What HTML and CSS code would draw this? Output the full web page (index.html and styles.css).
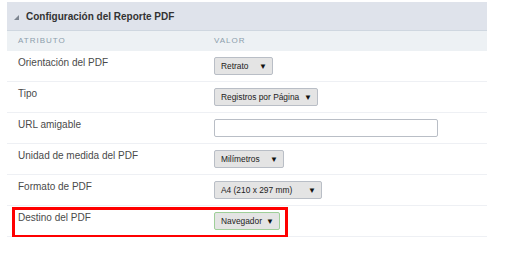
FILE: index.html
```html
<!DOCTYPE html>
<html lang="es">
<head>
  <meta charset="UTF-8" />
  <title>Configuración del Reporte PDF</title>
  <link rel="stylesheet" href="styles.css">
</head>
<body>
  <div class="panel">
    <div class="panel-title"><span class="caret"></span>Configuración del Reporte PDF</div>
    <div class="row head">
      <div>ATRIBUTO</div>
      <div>VALOR</div>
    </div>

    <div class="row">
      <div class="label">Orientación del PDF</div>
      <div><div class="select w-retrato"><span>Retrato</span><span class="arrow">▼</span></div></div>
    </div>
    <div class="row">
      <div class="label">Tipo</div>
      <div><div class="select w-tipo"><span>Registros por Página</span><span class="arrow">▼</span></div></div>
    </div>
    <div class="row">
      <div class="label">URL amigable</div>
      <div><div class="text-input"></div></div>
    </div>
    <div class="row">
      <div class="label">Unidad de medida del PDF</div>
      <div><div class="select w-unidad"><span>Milímetros</span><span class="arrow">▼</span></div></div>
    </div>
    <div class="row">
      <div class="label">Formato de PDF</div>
      <div><div class="select w-formato"><span>A4 (210 x 297 mm)</span><span class="arrow">▼</span></div></div>
    </div>
    <div class="row">
      <div class="label">Destino del PDF</div>
      <div><div class="select w-destino active"><span>Navegador</span><span class="arrow">▼</span></div></div>
    </div>

    <!-- highlight box -->
    <div class="highlight"></div>
  </div>
</body>
</html>
```

FILE: styles.css
```css
* {
  margin: 0;
  padding: 0;
  box-sizing: border-box;
}

body {
  background: #ffffff;
  font-family: 'Liberation Sans', Arial, sans-serif;
  color: #444;
  padding: 2px 0 0 7px;
}

.panel {
  width: 480px;
  position: relative;
}

.panel-title {
  height: 29px;
  background: #dfe3eb;
  border-bottom: 1px solid #cfd7e0;
  font-size: 10px;
  font-weight: bold;
  color: #333;
  display: flex;
  align-items: center;
  padding-left: 7px;
}

.caret {
  width: 0;
  height: 0;
  border-left: 5px solid transparent;
  border-bottom: 5px solid #7d8590;
  margin-right: 7px;
  margin-top: 2px;
}

.row {
  display: grid;
  grid-template-columns: 196px 1fr;
  padding: 6px 11px 6px 11px;
  border-bottom: 1px solid #eef0f4;
  min-height: 31px;
}

.row.head {
  background: #edf1f4;
  border-bottom: none;
  min-height: 20px;
  padding: 5px 11px 4px 11px;
  font-size: 8px;
  letter-spacing: 1px;
  color: #8c9eac;
}

.label {
  font-size: 10px;
  line-height: 12px;
  color: #4a4a4a;
}

.select {
  height: 18px;
  background: #e4e4e4;
  border: 1px solid #b9bec6;
  border-radius: 2px;
  display: flex;
  justify-content: space-between;
  align-items: center;
  padding: 0 5px 0 6px;
  font-size: 8.4px;
  color: #222;
}

.select .arrow {
  font-size: 8px;
  color: #111;
}

.select.active {
  border-color: #9fcf99;
}

.w-retrato { width: 59px; }
.w-tipo { width: 104px; }
.w-unidad { width: 70px; }
.w-formato { width: 108px; }
.w-destino { width: 66px; }

.text-input {
  width: 224px;
  height: 18px;
  background: #fff;
  border: 1px solid #b9bec6;
  border-radius: 2px;
}

.highlight {
  position: absolute;
  left: 5px;
  top: 205px;
  width: 276px;
  height: 31px;
  border: 3px solid #f00;
}
```
